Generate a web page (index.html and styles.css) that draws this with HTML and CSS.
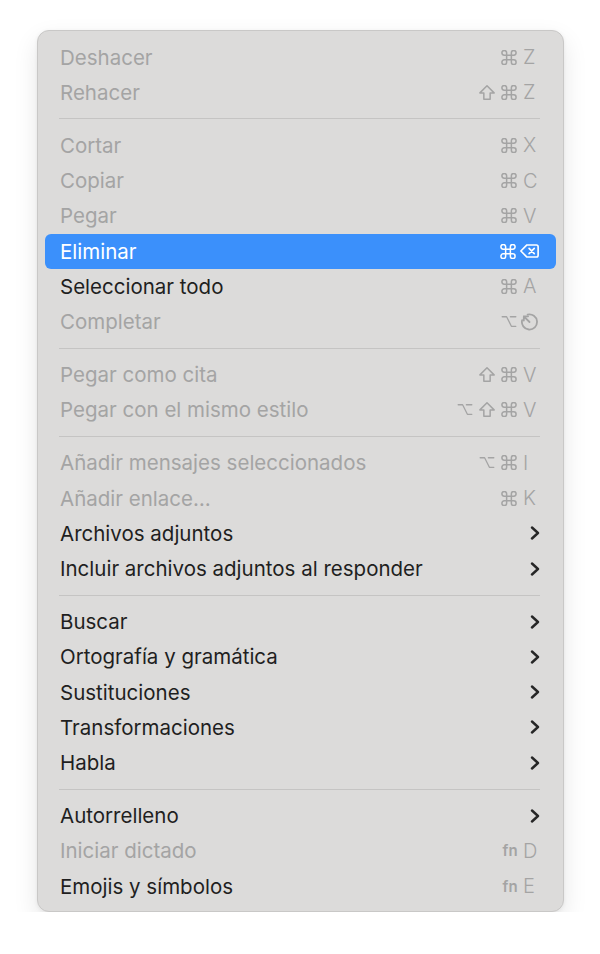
FILE: index.html
```html
<!DOCTYPE html>
<html lang="es">
<head>
<meta charset="utf-8">
<title>Menú Edición</title>
<link rel="stylesheet" href="styles.css">
</head>
<body>
<svg width="0" height="0" class="defs">
  <defs>
    <symbol id="cmd" viewBox="2.5 2.5 19 19"><path d="M15 6v12a3 3 0 1 0 3-3H6a3 3 0 1 0 3 3V6a3 3 0 1 0-3 3h12a3 3 0 1 0-3-3"/></symbol>
    <symbol id="shift" viewBox="2 2.5 20 19"><path d="M12 3.5 21 12.5h-5v8H8v-8H3z"/></symbol>
    <symbol id="opt" viewBox="1 1 22 22"><path d="M2 5h6.5l7 14H22M14 5h8"/></symbol>
    <symbol id="del" viewBox="1 2 22 16"><path d="M9 3h11a2 2 0 0 1 2 2v10a2 2 0 0 1-2 2H9l-7-7z"/><path d="M11.5 7l6 6M17.5 7l-6 6"/></symbol>
    <symbol id="esc" viewBox="2.5 2.5 19 19"><path d="M10 4.2A8 8 0 1 1 4.2 10"/><path d="M6 6l6 6M6 10.5V6h4.5"/></symbol>
    <symbol id="chev" viewBox="0 0 10 14"><path d="M2 1.5 8 7l-6 5.5"/></symbol>
  </defs>
</svg>

<div class="menu">
  <div class="row off"><span class="label">Deshacer</span><span class="sc"><svg class="mod"><use href="#cmd"/></svg><span class="key">Z</span></span></div>
  <div class="row off"><span class="label">Rehacer</span><span class="sc"><svg class="mod"><use href="#shift"/></svg><svg class="mod"><use href="#cmd"/></svg><span class="key">Z</span></span></div>
  <div class="sep"></div>
  <div class="row off"><span class="label">Cortar</span><span class="sc"><svg class="mod"><use href="#cmd"/></svg><span class="key">X</span></span></div>
  <div class="row off"><span class="label">Copiar</span><span class="sc"><svg class="mod"><use href="#cmd"/></svg><span class="key">C</span></span></div>
  <div class="row off"><span class="label">Pegar</span><span class="sc"><svg class="mod"><use href="#cmd"/></svg><span class="key">V</span></span></div>
  <div class="row active"><span class="label">Eliminar</span><span class="sc"><svg class="mod"><use href="#cmd"/></svg><svg class="keyicon del"><use href="#del"/></svg></span></div>
  <div class="row"><span class="label">Seleccionar todo</span><span class="sc"><svg class="mod"><use href="#cmd"/></svg><span class="key">A</span></span></div>
  <div class="row off"><span class="label">Completar</span><span class="sc"><svg class="mod"><use href="#opt"/></svg><svg class="keyicon"><use href="#esc"/></svg></span></div>
  <div class="sep"></div>
  <div class="row off"><span class="label">Pegar como cita</span><span class="sc"><svg class="mod"><use href="#shift"/></svg><svg class="mod"><use href="#cmd"/></svg><span class="key">V</span></span></div>
  <div class="row off"><span class="label">Pegar con el mismo estilo</span><span class="sc"><svg class="mod"><use href="#opt"/></svg><svg class="mod"><use href="#shift"/></svg><svg class="mod"><use href="#cmd"/></svg><span class="key">V</span></span></div>
  <div class="sep"></div>
  <div class="row off"><span class="label">Añadir mensajes seleccionados</span><span class="sc"><svg class="mod"><use href="#opt"/></svg><svg class="mod"><use href="#cmd"/></svg><span class="key">I</span></span></div>
  <div class="row off"><span class="label">Añadir enlace…</span><span class="sc"><svg class="mod"><use href="#cmd"/></svg><span class="key">K</span></span></div>
  <div class="row"><span class="label">Archivos adjuntos</span><svg class="chev"><use href="#chev"/></svg></div>
  <div class="row"><span class="label">Incluir archivos adjuntos al responder</span><svg class="chev"><use href="#chev"/></svg></div>
  <div class="sep"></div>
  <div class="row"><span class="label">Buscar</span><svg class="chev"><use href="#chev"/></svg></div>
  <div class="row"><span class="label">Ortografía y gramática</span><svg class="chev"><use href="#chev"/></svg></div>
  <div class="row"><span class="label">Sustituciones</span><svg class="chev"><use href="#chev"/></svg></div>
  <div class="row"><span class="label">Transformaciones</span><svg class="chev"><use href="#chev"/></svg></div>
  <div class="row"><span class="label">Habla</span><svg class="chev"><use href="#chev"/></svg></div>
  <div class="sep"></div>
  <div class="row"><span class="label">Autorrelleno</span><svg class="chev"><use href="#chev"/></svg></div>
  <div class="row off"><span class="label">Iniciar dictado</span><span class="sc"><span class="fn">fn</span><span class="key">D</span></span></div>
  <div class="row"><span class="label">Emojis y símbolos</span><span class="sc"><span class="fn">fn</span><span class="key">E</span></span></div>
</div>
</body>
</html>
```

FILE: styles.css
```css
html, body {
  margin: 0;
  padding: 0;
  background: #ffffff;
}

body {
  font-family: "Inter", "Noto Sans", sans-serif;
  -webkit-font-smoothing: antialiased;
}

.defs {
  position: absolute;
  width: 0;
  height: 0;
  overflow: hidden;
}

.menu {
  box-sizing: border-box;
  width: 527px;
  margin: 30px 0 0 37px;
  padding: 8.5px 7px 7.5px 7px;
  background: #dcdbda;
  border: 1px solid #c9c8c7;
  border-radius: 12px;
  box-shadow: 0 10px 24px rgba(0, 0, 0, 0.10), 0 1px 4px rgba(0, 0, 0, 0.06);
}

.row {
  display: flex;
  align-items: center;
  justify-content: space-between;
  height: 35.25px;
  padding: 0 17px 0 15px;
  border-radius: 6px;
  color: #1f1f1f;
  font-size: 20.5px;
}

.row.off {
  color: #a4a4a4;
}

.row.active {
  background: #3b90fb;
  color: #ffffff;
}

.sep {
  height: 17.75px;
  display: flex;
  align-items: center;
  padding: 0 16px 0 14px;
}

.sep::before {
  content: "";
  flex: 1;
  height: 1px;
  background: #c5c4c3;
}

.sc {
  display: flex;
  align-items: center;
  gap: 6px;
  color: #a4a4a4;
}

.row.active .sc {
  color: #ffffff;
}

.mod {
  width: 16px;
  height: 15px;
  fill: none;
  stroke: currentColor;
  stroke-width: 1.9;
  stroke-linejoin: round;
  stroke-linecap: round;
}

.key {
  width: 16px;
  font-size: 20px;
  font-weight: 300;
  line-height: 20px;
}

.keyicon {
  width: 19px;
  height: 18px;
  margin-left: -3px;
  fill: none;
  stroke: currentColor;
  stroke-width: 1.9;
  stroke-linejoin: round;
  stroke-linecap: round;
}

.keyicon.del {
  width: 19px;
  height: 14px;
  margin-left: -2px;
}

.fn {
  font-size: 15px;
  font-weight: 600;
  letter-spacing: 0.2px;
  margin-right: -1px;
}

.chev {
  width: 10px;
  height: 14px;
  margin-right: -1px;
  fill: none;
  stroke: #262626;
  stroke-width: 2.4;
  stroke-linejoin: round;
  stroke-linecap: round;
}
```
